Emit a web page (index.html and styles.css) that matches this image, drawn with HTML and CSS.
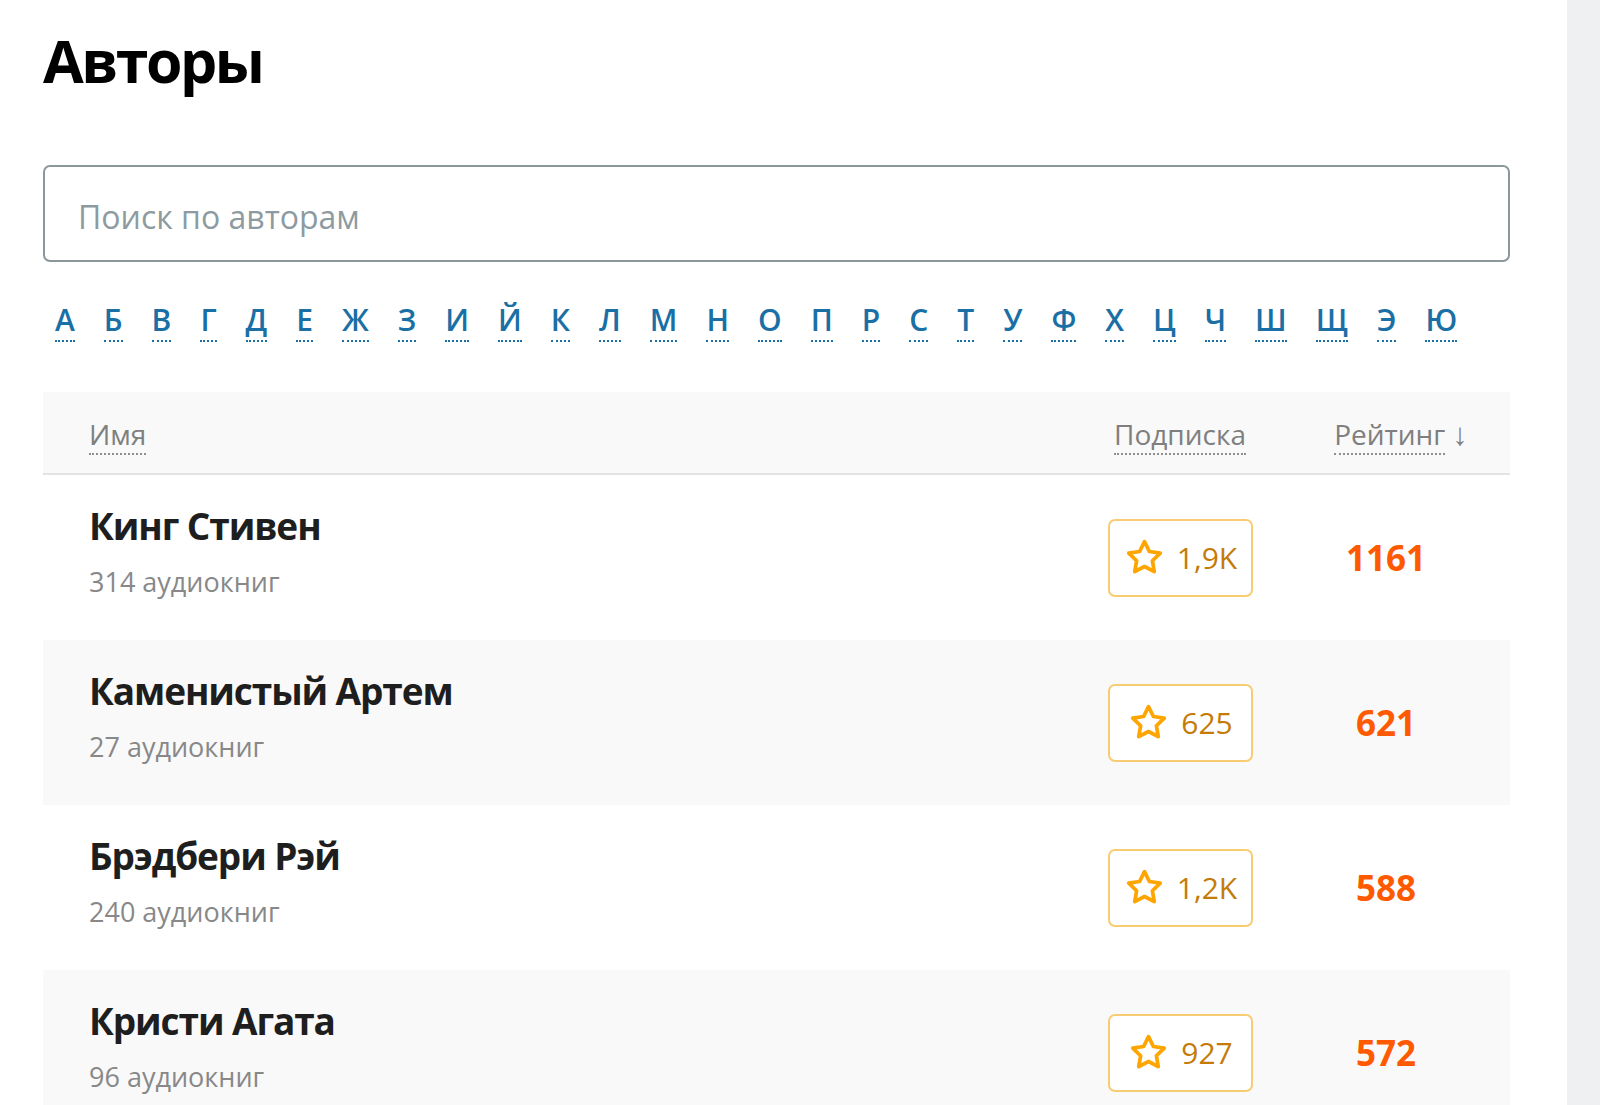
FILE: index.html
```html
<!DOCTYPE html>
<html lang="ru">
<head>
<meta charset="utf-8">
<title>Авторы</title>
<link rel="stylesheet" href="styles.css">
</head>
<body>
<div class="page">
  <main class="main">
    <h1 class="title">Авторы</h1>
    <input class="search" type="text" placeholder="Поиск по авторам">
    <nav class="letters">
      <a class="letter" href="#"><span>А</span></a>
      <a class="letter" href="#"><span>Б</span></a>
      <a class="letter" href="#"><span>В</span></a>
      <a class="letter" href="#"><span>Г</span></a>
      <a class="letter" href="#"><span>Д</span></a>
      <a class="letter" href="#"><span>Е</span></a>
      <a class="letter" href="#"><span>Ж</span></a>
      <a class="letter" href="#"><span>З</span></a>
      <a class="letter" href="#"><span>И</span></a>
      <a class="letter" href="#"><span>Й</span></a>
      <a class="letter" href="#"><span>К</span></a>
      <a class="letter" href="#"><span>Л</span></a>
      <a class="letter" href="#"><span>М</span></a>
      <a class="letter" href="#"><span>Н</span></a>
      <a class="letter" href="#"><span>О</span></a>
      <a class="letter" href="#"><span>П</span></a>
      <a class="letter" href="#"><span>Р</span></a>
      <a class="letter" href="#"><span>С</span></a>
      <a class="letter" href="#"><span>Т</span></a>
      <a class="letter" href="#"><span>У</span></a>
      <a class="letter" href="#"><span>Ф</span></a>
      <a class="letter" href="#"><span>Х</span></a>
      <a class="letter" href="#"><span>Ц</span></a>
      <a class="letter" href="#"><span>Ч</span></a>
      <a class="letter" href="#"><span>Ш</span></a>
      <a class="letter" href="#"><span>Щ</span></a>
      <a class="letter" href="#"><span>Э</span></a>
      <a class="letter" href="#"><span>Ю</span></a>
    </nav>

    <section class="table">
      <div class="thead">
        <div class="th th-name"><span class="sort">Имя</span></div>
        <div class="th th-sub"><span class="sort">Подписка</span></div>
        <div class="th th-rating"><span class="sort">Рейтинг</span><span class="arrow">↓</span></div>
      </div>

      <div class="row">
        <div class="cell-name">
          <div class="name">Кинг Стивен</div>
          <div class="count">314 аудиокниг</div>
        </div>
        <div class="cell-sub">
          <button class="sub-btn"><svg class="star" viewBox="0 0 24 24"><path d="M12 2.2l3 6.1 6.7 1-4.85 4.72 1.15 6.68L12 17.55l-6 3.15 1.15-6.68L2.3 9.3l6.7-1z"/></svg><span>1,9K</span></button>
        </div>
        <div class="cell-rating">1161</div>
      </div>

      <div class="row alt">
        <div class="cell-name">
          <div class="name">Каменистый Артем</div>
          <div class="count">27 аудиокниг</div>
        </div>
        <div class="cell-sub">
          <button class="sub-btn"><svg class="star" viewBox="0 0 24 24"><path d="M12 2.2l3 6.1 6.7 1-4.85 4.72 1.15 6.68L12 17.55l-6 3.15 1.15-6.68L2.3 9.3l6.7-1z"/></svg><span>625</span></button>
        </div>
        <div class="cell-rating">621</div>
      </div>

      <div class="row">
        <div class="cell-name">
          <div class="name">Брэдбери Рэй</div>
          <div class="count">240 аудиокниг</div>
        </div>
        <div class="cell-sub">
          <button class="sub-btn"><svg class="star" viewBox="0 0 24 24"><path d="M12 2.2l3 6.1 6.7 1-4.85 4.72 1.15 6.68L12 17.55l-6 3.15 1.15-6.68L2.3 9.3l6.7-1z"/></svg><span>1,2K</span></button>
        </div>
        <div class="cell-rating">588</div>
      </div>

      <div class="row alt">
        <div class="cell-name">
          <div class="name">Кристи Агата</div>
          <div class="count">96 аудиокниг</div>
        </div>
        <div class="cell-sub">
          <button class="sub-btn"><svg class="star" viewBox="0 0 24 24"><path d="M12 2.2l3 6.1 6.7 1-4.85 4.72 1.15 6.68L12 17.55l-6 3.15 1.15-6.68L2.3 9.3l6.7-1z"/></svg><span>927</span></button>
        </div>
        <div class="cell-rating">572</div>
      </div>
    </section>
  </main>
  <div class="track"></div>
</div>
</body>
</html>
```
FILE: styles.css
```css
* { box-sizing: border-box; }

html, body {
  margin: 0;
  padding: 0;
  height: 100%;
  overflow: hidden;
  background: #fff;
  font-family: "Open Sans", "Noto Sans", sans-serif;
}

.page {
  display: flex;
  height: 100vh;
  overflow: hidden;
}

.main {
  flex: 1;
  padding: 20px 57px 0 43px;
}

.track {
  width: 33px;
  flex: none;
  background: #eef0f2;
}

.title {
  margin: 0;
  font-size: 59px;
  line-height: 80px;
  font-weight: 700;
  color: #000;
  letter-spacing: -2.5px;
}

.search {
  display: block;
  width: 100%;
  height: 97px;
  margin-top: 65px;
  padding: 6px 33px 0;
  border: 2px solid #8c979c;
  border-radius: 7px;
  font-family: inherit;
  font-size: 32px;
  color: #333;
  outline: none;
  background: #fff;
}

.search::placeholder {
  color: #8d9ba1;
}

.letters {
  display: flex;
  gap: 29px;
  margin-top: 38px;
  padding-left: 12px;
  font-size: 30px;
  line-height: 40px;
  font-weight: 600;
}

.letter {
  color: #1a6fa5;
  text-decoration: none;
}

.letter span {
  border-bottom: 2px dotted #1a6fa5;
}

.table {
  margin-top: 52px;
}

.thead,
.row {
  display: grid;
  grid-template-columns: 1fr 192px 220px;
  padding: 0 14px 0 46px;
}

.thead {
  background: #f9f9f9;
  border-bottom: 2px solid #e3e3e3;
  padding-top: 22px;
  padding-bottom: 19px;
  font-size: 28px;
  line-height: 40px;
  color: #7f7f7f;
}

.th-sub,
.th-rating {
  text-align: center;
}

.th-rating {
  padding-left: 30px;
}

.arrow {
  margin-left: 7px;
  font-size: 31px;
  line-height: 1;
  color: #7f7f7f;
}

.sort {
  border-bottom: 2px dotted #8f8f8f;
}

.row {
  height: 165px;
  align-items: center;
}

.row.alt {
  background: #f9f9f9;
}

.cell-name {
  padding-bottom: 14px;
}

.name {
  font-size: 37px;
  line-height: 48px;
  font-weight: 700;
  color: #1e1e1e;
  letter-spacing: -1.1px;
}

.count {
  margin-top: 14px;
  font-size: 27px;
  line-height: 36px;
  color: #888;
}

.cell-sub {
  display: flex;
  justify-content: center;
}

.sub-btn {
  display: flex;
  align-items: center;
  justify-content: center;
  gap: 13px;
  width: 145px;
  height: 78px;
  padding: 0 0 0 2px;
  border: 2px solid #f8cc72;
  border-radius: 7px;
  background: #fff;
  font-family: inherit;
  font-size: 30px;
  color: #c47b08;
  cursor: pointer;
}

.star {
  width: 39px;
  height: 39px;
  fill: none;
  stroke: #ffa500;
  stroke-width: 2.3;
  stroke-linejoin: round;
}

.cell-rating {
  text-align: center;
  font-size: 35px;
  font-weight: 700;
  color: #ff5a00;
}
```
